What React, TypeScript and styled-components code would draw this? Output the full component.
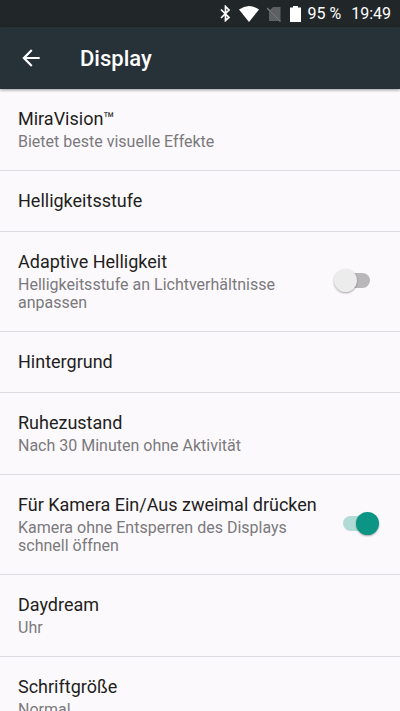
import React from 'react';
import styled, { createGlobalStyle } from 'styled-components';

const GlobalStyle = createGlobalStyle`
  * { box-sizing: border-box; }
  html, body, #root { height: 100%; }
  body { margin: 0; background: #fbf9fc; font-family: Roboto, sans-serif; overflow: hidden; }
`;
const Screen = styled.div`
  display: flex;
  flex-direction: column;
  height: 100%;
  overflow: hidden;
`;
const StatusBar = styled.div`
  display: flex;
  flex: none;
  align-items: center;
  justify-content: flex-end;
  height: 27px;
  padding-right: 9px;
  background: #212729;
  color: #fff;
  font-size: 16px;
  svg { display: block; }
`;
const StatusIcons = styled.div`
  display: flex;
  align-items: center;
  gap: 8px;
  margin-right: 6px;
`;
const Clock = styled.time`
  margin-left: 10px;
`;
const AppBar = styled.header`
  display: flex;
  flex: none;
  align-items: center;
  height: 62px;
  padding: 0 18px;
  gap: 36px;
  background: #263138;
  color: #fff;
  box-shadow: 0 1px 3px rgba(0, 0, 0, 0.4);
  z-index: 1;
`;
const BackButton = styled.button`
  display: flex;
  padding: 0;
  border: 0;
  background: none;
  color: inherit;
`;
const Title = styled.h1`
  margin: 0;
  padding-top: 2px;
  font-size: 22px;
  line-height: 28px;
  font-weight: 500;
`;
const List = styled.ul`
  flex: 1;
  margin: 0;
  padding: 0;
  list-style: none;
  overflow: hidden auto;
  scrollbar-width: none;
`;
const Item = styled.li`
  border-bottom: 1px solid #dedce0;
`;
const Row = styled.div`
  display: flex;
  align-items: center;
  justify-content: space-between;
  width: 100%;
  padding: 19px 18px;
  border: 0;
  background: none;
  font-family: inherit;
  text-align: left;
`;
const Texts = styled.label`
  display: flex;
  flex-direction: column;
  flex: 0 1 300px;
`;
const Name = styled.span`
  color: #1f1e20;
  font-size: 18px;
  line-height: 22px;
`;
const Summary = styled.span`
  color: #7b797c;
  font-size: 16px;
  line-height: 18px;
  padding-top: 3px;
`;
const Switch = styled.input`
  appearance: none;
  position: relative;
  flex: none;
  width: 27px;
  height: 15px;
  margin: 0 12px 3px 0;
  border-radius: 8px;
  background: #b9b7ba;
  &::before {
    content: '';
    position: absolute;
    top: -4px;
    left: -9px;
    width: 23px;
    height: 23px;
    border-radius: 50%;
    background: #ececec;
    box-shadow: 0 1px 2px rgba(0, 0, 0, 0.35);
  }
  &:checked { background: #b0dcd5; }
  &:checked::before { left: 13px; background: #0c9485; }
`;

type Setting = { name: string; summary?: string; on?: boolean };
const settings: Setting[] = [
  { name: 'MiraVision™', summary: 'Bietet beste visuelle Effekte' },
  { name: 'Helligkeitsstufe' },
  { name: 'Adaptive Helligkeit', summary: 'Helligkeitsstufe an Lichtverhältnisse anpassen', on: false },
  { name: 'Hintergrund' },
  { name: 'Ruhezustand', summary: 'Nach 30 Minuten ohne Aktivität' },
  { name: 'Für Kamera Ein/Aus zweimal drücken', summary: 'Kamera ohne Entsperren des Displays schnell öffnen', on: true },
  { name: 'Daydream', summary: 'Uhr' },
  { name: 'Schriftgröße', summary: 'Normal' },
];

function SettingItem({ name, summary, on }: Setting) {
  const toggle = on !== undefined;
  const id = name.replace(/\W/g, '');
  return (
    <Item>
      <Row as={toggle ? 'div' : 'button'}>
        <Texts as={toggle ? 'label' : 'span'} {...(toggle ? { htmlFor: id } : {})}>
          <Name>{name}</Name>
          {summary && <Summary>{summary}</Summary>}
        </Texts>
        {toggle && <Switch id={id} type="checkbox" role="switch" defaultChecked={on} />}
      </Row>
    </Item>
  );
}

export default function App() {
  return (
    <Screen>
      <GlobalStyle />
      <StatusBar>
        <StatusIcons>
          <svg width="11" height="17" viewBox="0 0 11 17" fill="none" stroke="#fff" strokeWidth="1.7"><path d="M1 4.5l8 8L5.500 15.500V1.500l3.500 3.500-8 8" /></svg>
          <svg width="20" height="16" viewBox="0 0 20 16" fill="#fff"><path d="M0 3.500Q10-3.500 20 3.500L10 16z" /></svg>
          <svg width="15" height="16" viewBox="0 0 15 16"><path d="M6 1h7.500v14H2V5z" fill="#5d6163" /><path d="M1 3l13 13" stroke="#212729" strokeWidth="1.500" /><path d="M0 2l13.500 13.500" stroke="#777b7d" strokeWidth="1.500" /></svg>
          <svg width="11" height="16" viewBox="0 0 11 16" fill="#fff"><path d="M3 0h5v1.500h3V16H0V1.500h3z" /></svg>
        </StatusIcons>
        <span>95 %</span>
        <Clock>19:49</Clock>
      </StatusBar>
      <AppBar>
        <BackButton aria-label="Zurück">
          <svg width="26" height="26" viewBox="0 0 24 24" fill="currentColor"><path d="M20 11H7.830l5.590-5.590L12 4l-8 8 8 8 1.410-1.410L7.830 13H20v-2z" /></svg>
        </BackButton>
        <Title>Display</Title>
      </AppBar>
      <List>{settings.map((s) => <SettingItem key={s.name} {...s} />)}</List>
    </Screen>
  );
}
